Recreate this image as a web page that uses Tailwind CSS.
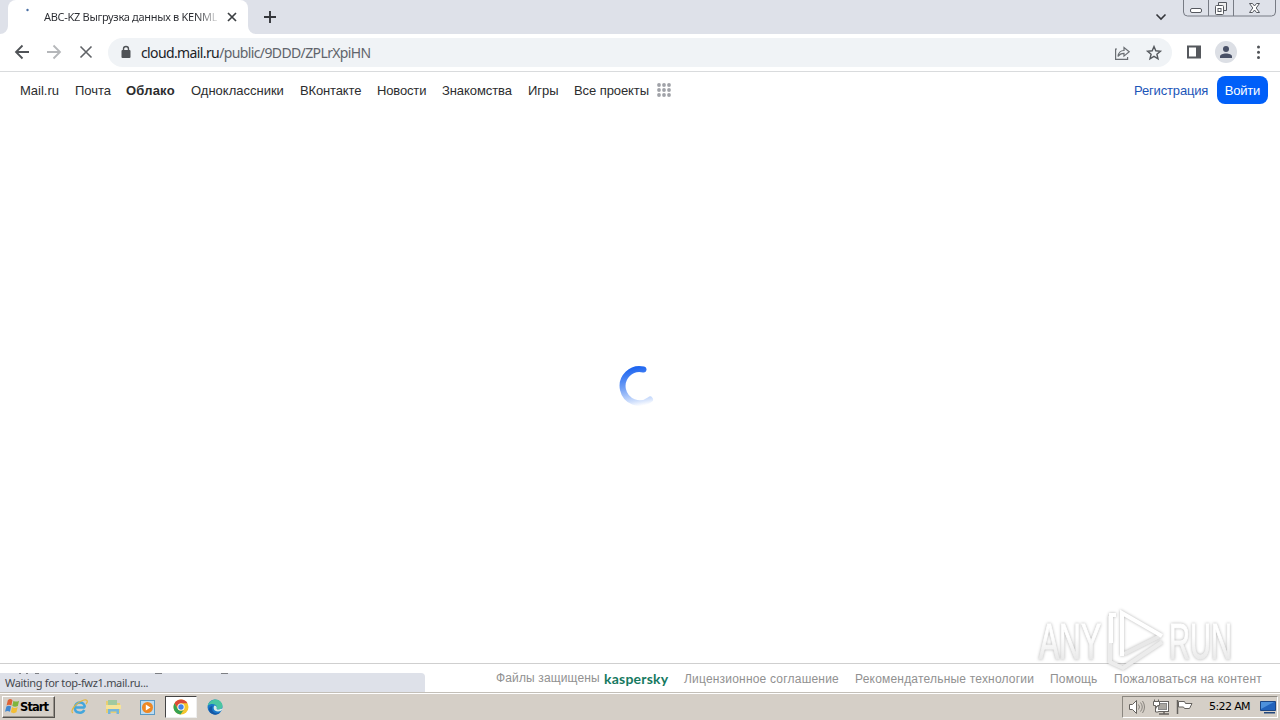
<!DOCTYPE html>
<html lang="ru">
<head>
<meta charset="utf-8">
<title>ABC-KZ Выгрузка данных в KENML</title>
<script src="https://cdn.jsdelivr.net/npm/@tailwindcss/browser@4"></script>
</head>
<body class="w-[1280px] h-[720px] overflow-hidden bg-white font-['Liberation_Sans',sans-serif] whitespace-nowrap">
<div class="relative flex flex-col w-[1280px] h-[720px] overflow-hidden">
  <!-- tab strip -->
  <header class="flex h-[34px] shrink-0 bg-[#dee1e9]">
    <svg class="w-2 h-[34px] shrink-0" viewBox="0 0 8 34"><path d="M8 26v8H0a8 8 0 0 0 8-8" fill="#fff"/></svg>
    <div class="flex w-[240px] shrink-0 rounded-t-lg bg-white">
      <svg class="w-[35px] h-[34px] shrink-0" viewBox="0 0 35 34"><circle cx="19.5" cy="10" r="1.2" fill="#4a6fa5"/></svg>
      <span class="w-[174px] overflow-hidden pt-[9px] pl-px text-[11px] leading-4 font-['Noto_Sans',sans-serif] tracking-[-0.3px] bg-linear-to-r from-[#2b2d32] from-88% to-[#3b3d42]/20 bg-clip-text text-transparent">ABC-KZ Выгрузка данных в KENML</span>
      <svg class="ml-[7px] mt-[9px] size-4 shrink-0" viewBox="0 0 16 16" stroke="#3c4043" stroke-width="1.7"><path d="m4 4 8 8m0-8-8 8"/></svg>
    </div>
    <svg class="w-2 h-[34px] shrink-0" viewBox="0 0 8 34"><path d="M0 26v8h8a8 8 0 0 1-8-8" fill="#fff"/></svg>
    <svg class="ml-1.5 mt-[9px] size-4" viewBox="0 0 16 16" stroke="#34363b" stroke-width="1.9"><path d="M8 2v12M2 8h12"/></svg>
    <svg class="ml-auto mt-[9px] mr-[14px] size-4" viewBox="0 0 16 16" fill="none" stroke="#34363b" stroke-width="1.6"><path d="m3.500 5.500 4.500 4.500 4.500-4.500"/></svg>
    <svg class="w-[97px] h-[18px]" viewBox="0 0 97 18" fill="none" stroke="#777b84"><path d="M.5 0v12q0 4 4 4h84q4 0 4-4V0M25.500 0v16M50.500 0v16"/><g stroke="#55585f"><rect x="7.500" y="8.500" width="11" height="4" rx="1.500" fill="#fff"/><path d="M35.500 5.500v-3h8v8h-3" fill="#eee"/><rect x="32.500" y="5.500" width="8" height="9" rx="1" fill="#fff"/><rect x="35" y="8.500" width="3" height="3"/><path d="M66.500 3.500h3l2 2.500 2-2.500h3l-3.300 4.500 3.300 4.500h-3l-2-2.500-2 2.500h-3l3.300-4.500z" fill="#fff"/></g></svg>
  </header>
  <!-- toolbar -->
  <div class="flex items-center h-[38px] shrink-0 border-b border-[#d9dbdd] bg-white">
    <svg class="w-[108px] h-[37px] shrink-0" viewBox="0 0 108 37" fill="none" stroke-width="1.8"><path d="M29 18H16m6.500-6.500L16 18l6.500 6.500" stroke="#505357"/><path d="M47 18h13m-6.500-6.500L60 18l-6.500 6.500" stroke="#b5b7ba"/><path d="m80.500 12.500 11 11m0-11-11 11" stroke="#606367" stroke-width="1.600"/></svg>
    <div class="flex items-center w-[1064px] h-[29px] rounded-full bg-[#f0f3f6] pl-3">
      <svg class="w-3 h-4" viewBox="0 0 12 16"><path d="M3.500 6V4a2.500 2.500 0 0 1 5 0V6" fill="none" stroke="#4f5256" stroke-width="1.400"/><rect x="1.500" y="5" width="9" height="8" rx="1" fill="#4f5256"/></svg>
      <span class="ml-[9px] text-[14px] text-[#60646b] font-['Noto_Sans',sans-serif] tracking-[-0.62px]"><span class="text-[#202226] tracking-[-0.62px]">cloud.mail.ru</span>/public/9DDD/ZPLrXpiHN</span>
      <svg class="ml-auto mr-[8px] w-[52px] h-5" viewBox="0 0 52 20" fill="none" stroke="#6a6e73" stroke-width="1.200"><path d="M5 6H3.600v10.400h12V14M6 13.500c.5-4 2.800-6 6-6V4.500l5.200 4.300-5.200 4.300v-2.800c-2.600 0-4.400.7-6 3.200z"/><path d="m42 3.500 1.800 4.300 4.600.4-3.500 3 1.100 4.600-4-2.500-4 2.500 1.100-4.600-3.500-3 4.600-.4z" stroke="#55595e" stroke-width="1.400"/></svg>
    </div>
    <svg class="w-[108px] h-[37px]" viewBox="0 0 108 37"><path d="M16 12.500h12v11H16z" fill="none" stroke="#55585d" stroke-width="2"/><path d="M24 12h4v12h-4z" fill="#55585d"/><circle cx="54" cy="18" r="11" fill="#dcdfe5"/><circle cx="54" cy="15" r="3" fill="#485066"/><path d="M48 24v-1.500c0-4 12-4 12 0V24z" fill="#485066"/><g fill="#505357"><circle cx="86.500" cy="13" r="1.500"/><circle cx="86.500" cy="18.200" r="1.500"/><circle cx="86.500" cy="23.400" r="1.500"/></g></svg>
  </div>
  <!-- portal navigation -->
  <nav class="flex items-center h-9 shrink-0 pl-5 pr-3 text-[13px] leading-5 text-[#2c2d2e]">
    <a class="w-[55px] pt-0.5">Mail.ru</a><a class="w-[51px] pt-0.5">Почта</a><a class="w-[65px] pt-0.5 font-bold tracking-[0.2px]">Облако</a><a class="w-[109px] pt-0.5">Одноклассники</a><a class="w-[77px] pt-0.5 tracking-[-0.15px]">ВКонтакте</a><a class="w-[65px] pt-0.5 tracking-[-0.15px]">Новости</a><a class="w-[86px] pt-0.5 tracking-[-0.08px]">Знакомства</a><a class="w-[46px] pt-0.5">Игры</a><a class="w-[83px] pt-0.5 tracking-[-0.08px]">Все проекты</a>
    <svg class="size-[14px]" viewBox="0 0 14 14" fill="#a0a2a8"><circle cx="2" cy="2" r="1.900"/><circle cx="7" cy="2" r="1.900"/><circle cx="12" cy="2" r="1.900"/><circle cx="2" cy="7" r="1.900"/><circle cx="7" cy="7" r="1.900"/><circle cx="12" cy="7" r="1.900"/><circle cx="2" cy="12" r="1.900"/><circle cx="7" cy="12" r="1.900"/><circle cx="12" cy="12" r="1.900"/></svg>
    <a class="ml-auto w-[83px] pt-0.5 tracking-[-0.16px] text-[#1c55b8]">Регистрация</a>
    <a class="flex items-center justify-center w-[51px] h-7 pt-0.5 rounded-lg bg-[#005ff9] text-white tracking-[-0.2px]">Войти</a>
  </nav>
  <main class="flex-1 pt-[257px] pl-[619px]">
    <svg class="size-[42px]" viewBox="0 0 42 42" fill="none" stroke-width="6" stroke-linecap="round">
      <defs><linearGradient id="spin" gradientUnits="userSpaceOnUse" x1="20" y1="2" x2="27" y2="40"><stop stop-color="#1f66f0"/><stop offset="0.45" stop-color="#6f9ef5"/><stop offset="0.85" stop-color="#cfdffc"/><stop offset="1" stop-color="#fff"/></linearGradient></defs>
      <path d="M24.500 4.500A17 17 0 1 0 31 34.500" stroke="url(#spin)"/>
    </svg>
  </main>
  <!-- page footer -->
  <footer class="flex h-[29px] shrink-0 border-t border-[#cfcfcf] pl-[496px] pt-[6px] text-[12px] leading-[18px] text-[#919191] tracking-[0.2px]">
    <span class="w-[108px] -mt-px tracking-[0.14px]">Файлы защищены</span>
    <span class="w-[80px] font-['Lato',sans-serif] font-bold text-[14px] tracking-[0.22px] text-[#16795f]">kaspersky</span>
    <span class="w-[171px]">Лицензионное соглашение</span><span class="w-[195px]">Рекомендательные технологии</span><span class="w-[64px]">Помощь</span><span>Пожаловаться на контент</span>
  </footer>
  <!-- taskbar -->
  <div class="flex items-center h-7 shrink-0 px-0.5 bg-[#d5cfc7] border-t border-[#c3bfb8] shadow-[inset_0_1px_0_#fff] font-['DejaVu_Sans',sans-serif] text-black">
    <div class="flex items-center w-[53px] h-[22px] pl-0.5 border border-t-white border-l-white border-r-[#55524e] border-b-[#55524e] shadow-[inset_-1px_-1px_0_#99948c]">
      <svg class="w-[15px] h-[17px] shrink-0" viewBox="0 0 16 16" preserveAspectRatio="none"><path d="M3 2c2-1.500 3.500-1 5 0L6.800 7C5 6 3.500 6 1.700 7z" fill="#df6335"/><path d="M9 2.500c2 1.200 4 1 6 0L13.700 7.500c-2 1-4 1-5.900 0z" fill="#7fb53d"/><path d="M1.500 8c2-1 3.500-.9 5 0l-1.200 5C3.500 12 2 12 0 13z" fill="#4188d1"/><path d="M7.500 8.500c2 1.200 4 1 6 0l-1.300 5c-2 1-4 1-5.900 0z" fill="#f3be35"/></svg>
      <span class="font-bold text-[11.500px] leading-4 tracking-[-0.9px]">Start</span>
    </div>
    <svg class="ml-[15px] w-[90px] h-5 shrink-0" viewBox="0 0 90 20">
      <g fill="none"><path d="M14.800 10.500c0-7-10-6.500-10 .2 0 5.800 7.500 6.500 9.500 2.300M5 10.500h9.800" stroke="#43a6dc" stroke-width="2.500"/><path d="M3 16c-4-2 4-11 11-13 4-1 4 2 2 4" stroke="#e2b63e" stroke-width="1.200"/></g>
      <g><path d="M36 4h5l1.500 2H50v10H36z" fill="#e8ce72"/><path d="M38 3h9v5h-9z" fill="#9fc9a0"/><path d="M36 8h15v4H36z" fill="#f5e399"/><path d="M38 17v-5h11v5h-2.500v-2.500h-6V17z" fill="#75b6db"/></g>
      <rect x="70.500" y="3.500" width="14" height="14" fill="#bcdcf2" stroke="#5b9ac5"/><circle cx="77.500" cy="10.500" r="5.500" fill="#ee8824"/><path d="m75.800 7.500 4.700 3-4.700 3z" fill="#fff"/>
    </svg>
    <div class="flex items-center justify-center ml-[5px] w-8 h-[22px] shrink-0 bg-white border border-t-[#444] border-l-[#444] border-r-[#eee] border-b-[#eee]">
      <svg class="size-4" viewBox="0 0 16 16"><circle cx="8" cy="8" r="7.500" fill="#f5c62e"/><path d="M1.500 4.250A7.500 7.500 0 0 1 14.500 4.250H8A3.750 3.750 0 0 0 4.750 9.900z" fill="#dc4a38"/><path d="M1.500 4.250A7.500 7.500 0 0 0 7.500 15.500L11.250 9.900A3.750 3.750 0 0 1 4.750 9.900z" fill="#35a253"/><circle cx="8" cy="8" r="3.600" fill="#fff"/><circle cx="8" cy="8" r="2.700" fill="#4383e8"/></svg>
    </div>
    <svg class="ml-[10px] size-4 shrink-0" viewBox="0 0 16 16"><circle cx="8" cy="8" r="7.500" fill="#1976c9"/><path d="M.6 7C2 .5 11-2 14.700 4c2 3.500.2 6.500-3.200 6.500-2 0-2.300-.8-1.700-1.600C10.500 5 4 3.500.6 7z" fill="#4ac5a2"/><path d="M5.500 7C3.500 12 8 16 13 13.500c-2 3-8 3-10.500-1C1 9.500 3 7 5.500 7z" fill="#1557a4"/><path d="M7.500 6.500c-1.800 2-.8 6 3.500 6 2 0 3.500-.8 4.500-2 .5-1.500.5-1-3.500 0-2.500 0-2.800-.8-2.200-1.600 0-1.200-1-2.400-2.300-2.400z" fill="#d6ece9"/></svg>
    <div class="flex items-center ml-auto w-[156px] h-[22px] border border-t-[#8b8780] border-l-[#8b8780] border-r-white border-b-white">
      <svg class="ml-1 w-[76px] h-5 shrink-0" viewBox="0 0 76 20" fill="none" stroke="#65625e"><path d="M2.500 7.500h3l4-4v13l-4-4h-3z" fill="#fff"/><path d="M11.500 7.500q2 2.500 0 5M13.500 5.500q3.500 4.500 0 9M15.500 4q4 6 0 12" stroke="#88847e"/><rect x="29.500" y="4.500" width="12" height="10" fill="#fff"/><rect x="31.500" y="6.500" width="8" height="6" fill="#aaa7a1" stroke="#888"/><path d="M32 17h10M37 14v3" stroke-width="1.500"/><path d="M26.500 4.500h6v4h-2v1h-2v-1h-2zM28.500 9v6h3M27.500 2.500v2M31.500 2.500v2" fill="#fff"/><path d="M50.500 3v14" stroke-width="1.500"/><path d="M51.500 4.500h6l1 2h6.500l-2.500 5h-5l-1-1.500h-5z" fill="#fff"/></svg>
      <span class="ml-1.5 w-[41px] text-[11px] leading-4 tracking-[-0.6px]">5:22 AM</span>
      <svg class="ml-[10px] w-4 h-4 shrink-0" viewBox="0 0 16 16"><path d="M.5 2.500h15v9H.5z" fill="#2263bc" stroke="#1c4685"/><path d="M1 3h13L1 10z" fill="#4e91dc"/><path d="M4 13h11v1.500H4z" fill="#23477b"/></svg>
    </div>
  </div>
  <!-- link status bubble over the page footer -->
  <div class="absolute left-0 top-[673px] w-[425px] h-[19px] pl-[5px] rounded-tr bg-[#dee1e9] overflow-hidden text-[11px] leading-5 tracking-[-0.32px] text-[#45484e] font-['Noto_Sans',sans-serif]">Waiting for top-fwz1.mail.ru...
    <svg class="absolute left-0 top-0 w-60 h-px" viewBox="0 0 240 1" fill="#7d7f84"><path d="M19 0h2v1h-2zM26 0h2v1h-2zM35 0h4v1h-4zM75 0h3v1h-3zM155 0h7v1h-7zM221 0h7v1h-7z"/></svg>
  </div>
  <!-- watermark -->
  <svg class="absolute left-[1030px] top-[604px] w-[230px] h-[90px] overflow-visible drop-shadow-[0_0_1.500px_rgba(0,0,0,0.3)]" viewBox="0 0 230 90">
    <defs><linearGradient id="wm" x1="0" y1="0" x2="0" y2="1"><stop offset="0.4" stop-color="#fff"/><stop offset="0.9" stop-color="#e4e4e4"/></linearGradient></defs>
    <g fill="url(#wm)" stroke="url(#wm)" stroke-width="1" font-family="Liberation Sans, sans-serif" font-size="50">
      <text x="9" y="55" textLength="62" lengthAdjust="spacingAndGlyphs">ANY</text>
      <text x="139" y="55" textLength="63" lengthAdjust="spacingAndGlyphs">RUN</text>
    </g>
    <g fill="none" stroke-width="4"><path d="M80 12v46l13 6 39-26" stroke="#ececec"/><path d="M94 50l36-18" stroke="#e8e8e8"/><path d="M86 11h-5v28" stroke="#fff"/><path d="M92 52V9l40 23" stroke="#fff"/></g>
  </svg>
</div>
</body>
</html>
